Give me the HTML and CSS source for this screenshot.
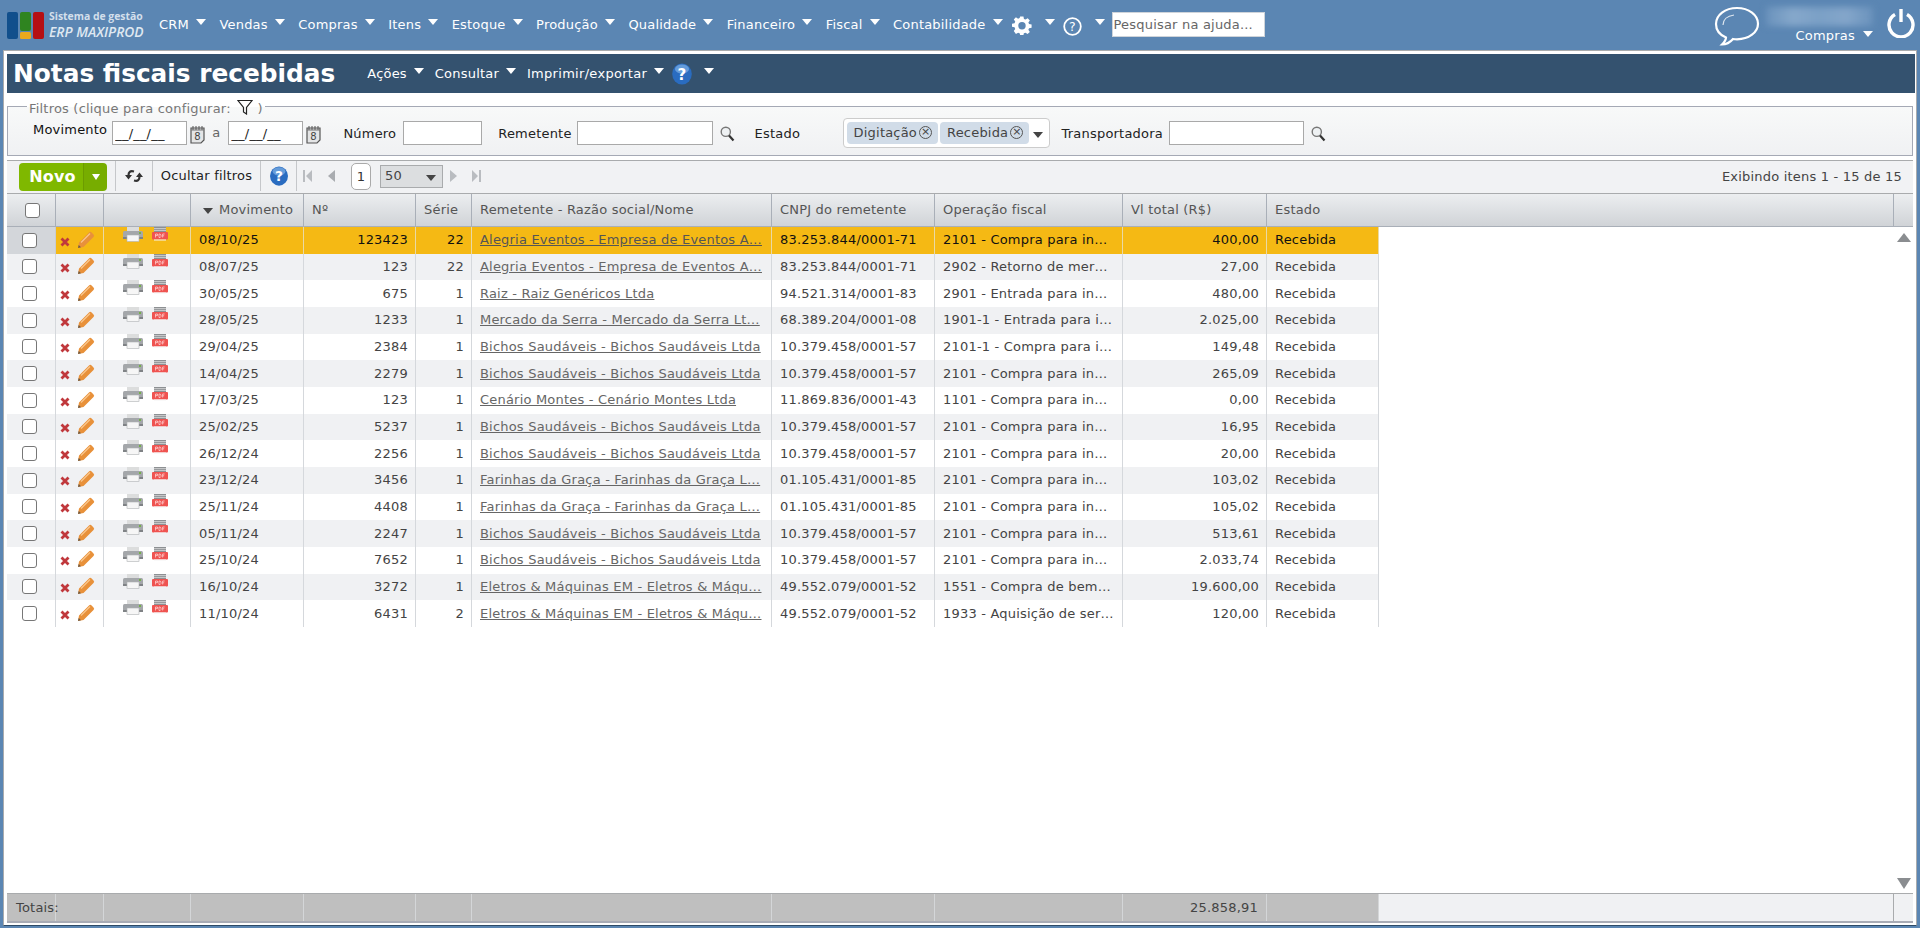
FILE: index.html
```html
<!DOCTYPE html>
<html lang="pt-BR">
<head>
<meta charset="utf-8">
<title>Notas fiscais recebidas</title>
<link rel="stylesheet" href="styles.css">
</head>
<body>
<svg class="defs" width="0" height="0" aria-hidden="true">
  <defs>
    <symbol id="i-x" viewBox="0 0 10 10"><path d="M1.5 1.5 8.5 8.5M8.5 1.5 1.5 8.5" stroke="#c0383c" stroke-width="2.8" fill="none"/></symbol>
    <symbol id="i-pencil" viewBox="0 0 18 18"><path d="M1 17 2 11.500 12 1.500a1.800 1.800 0 0 1 2.600 0l1.900 1.900a1.800 1.800 0 0 1 0 2.600L6.500 16Z" fill="#e8913a"/><path d="M4 11.500 13 2.500" stroke="#f9c78c" stroke-width="1.200"/><path d="M1 17 1.700 14 4 16.300Z" fill="#6b5a45"/></symbol>
    <symbol id="i-printer" viewBox="0 0 20 15"><rect x="4" y="0" width="12" height="5" fill="#dcdddd"/><rect x="0" y="4" width="20" height="7" rx="1.500" fill="#a4a7aa"/><rect x="0" y="10" width="20" height="2" fill="#7f8285"/><rect x="4" y="8" width="12" height="6.500" fill="#f6f6f6" stroke="#b0b2b4" stroke-width=".6"/><rect x="16" y="5" width="2" height="2" fill="#74b04a"/></symbol>
    <symbol id="i-pdf" viewBox="0 0 16 14"><rect x="2" y="0" width="12" height="5" fill="#8d9093"/><path d="M2 1.600h12M2 3.400h12" stroke="#e6e6e6" stroke-width=".7"/><rect x="0" y="5" width="16" height="7.500" rx="1" fill="#ef5350"/><rect x="2" y="12.500" width="12" height="1" fill="#f4f4f4"/><path d="M3.500 7v3.500M3.500 7h2v1.600h-2M7 7v3.500h1.200l.8-1V8l-.8-1H7M10.600 7v3.500M10.600 7h2M10.600 8.800h1.600" stroke="#ffdcdc" stroke-width=".7" fill="none"/></symbol>
    <symbol id="i-cal" viewBox="0 0 15 19"><path d="M1 3h13v12l-3 3H1Z" fill="#e4e5e6" stroke="#555" stroke-width="1.200"/><path d="M3 1v4M6 1v4M9 1v4M12 1v4" stroke="#555" stroke-width="1"/><path d="M1 5h13" stroke="#777"/><text x="7.500" y="15" font-size="10" text-anchor="middle" fill="#444" font-family="DejaVu Sans">8</text></symbol>
    <symbol id="i-search" viewBox="0 0 15 16"><circle cx="5.800" cy="5.800" r="4.600" fill="#eef1f3" stroke="#777" stroke-width="1.400"/><path d="M9 9.500 13.500 14.500" stroke="#333" stroke-width="2.200"/></symbol>
    <symbol id="i-help" viewBox="0 0 20 24"><ellipse cx="10" cy="12" rx="9.800" ry="10.500" fill="#2a6cc0"/><ellipse cx="10" cy="7" rx="7" ry="4.500" fill="#7fb0e6" opacity=".7"/><text x="10" y="17.500" font-size="15" font-weight="700" text-anchor="middle" fill="#fff" font-family="DejaVu Sans">?</text></symbol>
  </defs>
</svg>

<header class="topbar">
  <div class="logo">
    <svg class="logo-mark" width="38" height="28" viewBox="0 0 38 28">
      <rect x="0" y="0" width="11" height="27" rx="2" fill="#114f8c"/>
      <rect x="13" y="0" width="11" height="19" rx="2" fill="#2f8420"/>
      <rect x="13" y="20" width="11" height="7" rx="1.500" fill="#e9a91d"/>
      <rect x="26" y="0" width="11" height="27" rx="2" fill="#b50f14"/>
    </svg>
    <div class="logo-text">
      <span class="logo-a">Sistema de gestão</span>
      <span class="logo-b">ERP MAXIPROD</span>
    </div>
  </div>
  <nav class="mainnav">
    <span class="navitem">CRM<i class="caret"></i></span>
    <span class="navitem">Vendas<i class="caret"></i></span>
    <span class="navitem">Compras<i class="caret"></i></span>
    <span class="navitem">Itens<i class="caret"></i></span>
    <span class="navitem">Estoque<i class="caret"></i></span>
    <span class="navitem">Produção<i class="caret"></i></span>
    <span class="navitem">Qualidade<i class="caret"></i></span>
    <span class="navitem">Financeiro<i class="caret"></i></span>
    <span class="navitem">Fiscal<i class="caret"></i></span>
    <span class="navitem navitem-last">Contabilidade<i class="caret"></i></span>
    <span class="navicon navicon-gear">
      <svg width="20" height="20" viewBox="0 0 20 20"><path d="M8.300 1h3.400l.5 2.600 1.600.7 2.200-1.500 2.200 2.300-1.500 2.100.7 1.700 2.600.4v3.300l-2.600.5-.7 1.600 1.500 2.200-2.300 2.200-2.100-1.500-1.700.7-.4 1.600H8.300l-.5-1.600-1.600-.7-2.200 1.500L1.800 16l1.500-2.200-.7-1.600-2.600-.5V8.400l2.600-.5.7-1.600L1.800 4.100 4 1.900l2.200 1.500 1.600-.7Z" fill="#fff" transform="translate(0 -.6) scale(.98)"/><circle cx="10" cy="9.700" r="3.700" fill="#5b86b3"/></svg>
      <i class="caret"></i>
    </span>
    <span class="navicon navicon-help">
      <svg width="19" height="19" viewBox="0 0 19 19"><circle cx="9.500" cy="9.500" r="8.300" fill="none" stroke="#fff" stroke-width="1.800"/><text x="9.500" y="14" font-size="12.500" text-anchor="middle" fill="#fff" font-family="DejaVu Sans">?</text></svg>
      <i class="caret"></i>
    </span>
    <input class="helpsearch" type="text" placeholder="Pesquisar na ajuda...">
  </nav>
  <div class="userarea">
    <svg class="chat" width="46" height="40" viewBox="0 0 46 40"><path d="M23 2C11 2 2 9 2 18c0 6 4 11 10 13.500 0 2-1 4-4 7 4 0 8-2 11-5.500 1.400.2 2.700.3 4 .3 12 0 21-7 21-15.500S35 2 23 2Z" fill="none" stroke="#fff" stroke-width="2.200"/><path d="M9 19c0-5 4-9 11-10" fill="none" stroke="#fff" stroke-width="1.200" opacity=".8"/></svg>
    <div class="user">
      <div class="user-blur"></div>
      <div class="user-role">Compras<i class="caret"></i></div>
    </div>
    <svg class="power" width="28" height="30" viewBox="0 0 28 30"><path d="M8 6.500a12 12 0 1 0 12 0" fill="none" stroke="#fff" stroke-width="3.400"/><path d="M14 1v13" stroke="#fff" stroke-width="3.400"/></svg>
  </div>
</header>

<main class="panel">
  <section class="titlebar">
    <h1>Notas fiscais recebidas</h1>
    <span class="tmenu tmenu-a">Ações<i class="caret"></i></span>
    <span class="tmenu tmenu-a">Consultar<i class="caret"></i></span>
    <span class="tmenu tmenu-last">Imprimir/exportar<i class="caret"></i></span>
    <svg class="thelp" width="20" height="24"><use href="#i-help"/></svg>
    <i class="caret thelp-caret"></i>
  </section>

  <fieldset class="filters">
    <legend>Filtros (clique para configurar:
      <svg class="funnel" width="16" height="16" viewBox="0 0 16 16"><path d="M1 1.500h14L9.500 8.500V15l-3-2V8.500Z" fill="#fff" stroke="#222" stroke-width="1.200"/></svg>
    )</legend>
    <span class="flabel flabel-up">Movimento</span>
    <input class="date" type="text" value="__/__/__">
    <svg class="cal" width="15" height="19"><use href="#i-cal"/></svg>
    <span class="sep-a">a</span>
    <input class="date" type="text" value="__/__/__">
    <svg class="cal" width="15" height="19"><use href="#i-cal"/></svg>
    <span class="flabel f-num">Número</span>
    <input class="num" type="text">
    <span class="flabel f-rem">Remetente</span>
    <input class="rem" type="text">
    <svg class="search" width="15" height="16"><use href="#i-search"/></svg>
    <span class="flabel f-est">Estado</span>
    <div class="multi">
      <span class="chip">Digitação<i class="chipx">×</i></span>
      <span class="chip">Recebida<i class="chipx">×</i></span>
      <i class="caret caret-dark"></i>
    </div>
    <span class="flabel f-tra">Transportadora</span>
    <input class="tra" type="text">
    <svg class="search" width="15" height="16"><use href="#i-search"/></svg>
  </fieldset>

  <section class="grid">
    <div class="toolbar">
      <div class="novo"><span class="novo-main">Novo</span><span class="novo-drop"><i class="caret caret-small"></i></span></div>
      <div class="tool tool-refresh">
        <svg width="18" height="16" viewBox="0 0 18 16"><path d="M9 3.500C5 2.500 3.500 4 3.500 7.500M9 12.500C13 13.500 14.500 12 14.500 8.500" fill="none" stroke="#333" stroke-width="2.200"/><path d="M0 7h7l-3.500 4.500ZM11 9h7l-3.500-4.500Z" fill="#333"/></svg>
      </div>
      <div class="tool tool-text">Ocultar filtros</div>
      <div class="tool tool-help"><svg width="20" height="22"><use href="#i-help"/></svg></div>
      <div class="pager">
        <svg width="10" height="12" viewBox="0 0 10 12"><path d="M0 0h2v12H0ZM9 0v12L3 6Z" fill="#b9bcc0"/></svg>
        <svg class="pg-prev" width="7" height="12" viewBox="0 0 7 12"><path d="M7 0v12L0 6Z" fill="#a9acb0"/></svg>
        <span class="pg-num">1</span>
        <span class="pg-size">50<i class="caret caret-dark caret-wide"></i></span>
        <svg class="pg-next" width="7" height="12" viewBox="0 0 7 12"><path d="M0 0v12L7 6Z" fill="#b9bcc0"/></svg>
        <svg class="pg-last" width="10" height="12" viewBox="0 0 10 12"><path d="M0 0v12L6 6ZM7 0h2v12H7Z" fill="#b9bcc0"/></svg>
      </div>
      <div class="showing">Exibindo itens 1 - 15 de 15</div>
    </div>

    <table class="thead">
      <colgroup><col class="c1"><col class="c2"><col class="c3"><col class="c4"><col class="c5"><col class="c6"><col class="c7"><col class="c8"><col class="c9"><col class="c10"><col class="c11"><col class="c12"><col class="c13"></colgroup>
      <tr>
        <th class="hcheck"><input class="check" type="checkbox"></th><th></th><th></th>
        <th class="hsort"><i class="caret caret-dark"></i>Movimento</th><th>Nº</th><th>Série</th>
        <th>Remetente - Razão social/Nome</th><th>CNPJ do remetente</th><th>Operação fiscal</th><th>Vl total (R$)</th>
        <th colspan="2">Estado</th><th></th>
      </tr>
    </table>

    <div class="gridbody">
      <table class="tbody">
        <colgroup><col class="c1"><col class="c2"><col class="c3"><col class="c4"><col class="c5"><col class="c6"><col class="c7"><col class="c8"><col class="c9"><col class="c10"><col class="c11"></colgroup>
        <tr class="sel"><td class="tdc"><input class="check" type="checkbox"></td><td class="acts"><svg class="ix" width="10" height="10"><use href="#i-x"/></svg><svg class="ip" width="18" height="18"><use href="#i-pencil"/></svg></td><td class="prints"><svg width="20" height="15"><use href="#i-printer"/></svg><svg class="ipdf" width="16" height="14"><use href="#i-pdf"/></svg></td><td>08/10/25</td><td class="r">123423</td><td class="r">22</td><td><a>Alegria Eventos - Empresa de Eventos A…</a></td><td>83.253.844/0001-71</td><td>2101 - Compra para in…</td><td class="r">400,00</td><td>Recebida</td></tr>
        <tr><td class="tdc"><input class="check" type="checkbox"></td><td class="acts"><svg class="ix" width="10" height="10"><use href="#i-x"/></svg><svg class="ip" width="18" height="18"><use href="#i-pencil"/></svg></td><td class="prints"><svg width="20" height="15"><use href="#i-printer"/></svg><svg class="ipdf" width="16" height="14"><use href="#i-pdf"/></svg></td><td>08/07/25</td><td class="r">123</td><td class="r">22</td><td><a>Alegria Eventos - Empresa de Eventos A…</a></td><td>83.253.844/0001-71</td><td>2902 - Retorno de mer…</td><td class="r">27,00</td><td>Recebida</td></tr>
        <tr><td class="tdc"><input class="check" type="checkbox"></td><td class="acts"><svg class="ix" width="10" height="10"><use href="#i-x"/></svg><svg class="ip" width="18" height="18"><use href="#i-pencil"/></svg></td><td class="prints"><svg width="20" height="15"><use href="#i-printer"/></svg><svg class="ipdf" width="16" height="14"><use href="#i-pdf"/></svg></td><td>30/05/25</td><td class="r">675</td><td class="r">1</td><td><a>Raiz - Raiz Genéricos Ltda</a></td><td>94.521.314/0001-83</td><td>2901 - Entrada para in…</td><td class="r">480,00</td><td>Recebida</td></tr>
        <tr><td class="tdc"><input class="check" type="checkbox"></td><td class="acts"><svg class="ix" width="10" height="10"><use href="#i-x"/></svg><svg class="ip" width="18" height="18"><use href="#i-pencil"/></svg></td><td class="prints"><svg width="20" height="15"><use href="#i-printer"/></svg><svg class="ipdf" width="16" height="14"><use href="#i-pdf"/></svg></td><td>28/05/25</td><td class="r">1233</td><td class="r">1</td><td><a>Mercado da Serra - Mercado da Serra Lt…</a></td><td>68.389.204/0001-08</td><td>1901-1 - Entrada para i…</td><td class="r">2.025,00</td><td>Recebida</td></tr>
        <tr><td class="tdc"><input class="check" type="checkbox"></td><td class="acts"><svg class="ix" width="10" height="10"><use href="#i-x"/></svg><svg class="ip" width="18" height="18"><use href="#i-pencil"/></svg></td><td class="prints"><svg width="20" height="15"><use href="#i-printer"/></svg><svg class="ipdf" width="16" height="14"><use href="#i-pdf"/></svg></td><td>29/04/25</td><td class="r">2384</td><td class="r">1</td><td><a>Bichos Saudáveis - Bichos Saudáveis Ltda</a></td><td>10.379.458/0001-57</td><td>2101-1 - Compra para i…</td><td class="r">149,48</td><td>Recebida</td></tr>
        <tr><td class="tdc"><input class="check" type="checkbox"></td><td class="acts"><svg class="ix" width="10" height="10"><use href="#i-x"/></svg><svg class="ip" width="18" height="18"><use href="#i-pencil"/></svg></td><td class="prints"><svg width="20" height="15"><use href="#i-printer"/></svg><svg class="ipdf" width="16" height="14"><use href="#i-pdf"/></svg></td><td>14/04/25</td><td class="r">2279</td><td class="r">1</td><td><a>Bichos Saudáveis - Bichos Saudáveis Ltda</a></td><td>10.379.458/0001-57</td><td>2101 - Compra para in…</td><td class="r">265,09</td><td>Recebida</td></tr>
        <tr><td class="tdc"><input class="check" type="checkbox"></td><td class="acts"><svg class="ix" width="10" height="10"><use href="#i-x"/></svg><svg class="ip" width="18" height="18"><use href="#i-pencil"/></svg></td><td class="prints"><svg width="20" height="15"><use href="#i-printer"/></svg><svg class="ipdf" width="16" height="14"><use href="#i-pdf"/></svg></td><td>17/03/25</td><td class="r">123</td><td class="r">1</td><td><a>Cenário Montes - Cenário Montes Ltda</a></td><td>11.869.836/0001-43</td><td>1101 - Compra para in…</td><td class="r">0,00</td><td>Recebida</td></tr>
        <tr><td class="tdc"><input class="check" type="checkbox"></td><td class="acts"><svg class="ix" width="10" height="10"><use href="#i-x"/></svg><svg class="ip" width="18" height="18"><use href="#i-pencil"/></svg></td><td class="prints"><svg width="20" height="15"><use href="#i-printer"/></svg><svg class="ipdf" width="16" height="14"><use href="#i-pdf"/></svg></td><td>25/02/25</td><td class="r">5237</td><td class="r">1</td><td><a>Bichos Saudáveis - Bichos Saudáveis Ltda</a></td><td>10.379.458/0001-57</td><td>2101 - Compra para in…</td><td class="r">16,95</td><td>Recebida</td></tr>
        <tr><td class="tdc"><input class="check" type="checkbox"></td><td class="acts"><svg class="ix" width="10" height="10"><use href="#i-x"/></svg><svg class="ip" width="18" height="18"><use href="#i-pencil"/></svg></td><td class="prints"><svg width="20" height="15"><use href="#i-printer"/></svg><svg class="ipdf" width="16" height="14"><use href="#i-pdf"/></svg></td><td>26/12/24</td><td class="r">2256</td><td class="r">1</td><td><a>Bichos Saudáveis - Bichos Saudáveis Ltda</a></td><td>10.379.458/0001-57</td><td>2101 - Compra para in…</td><td class="r">20,00</td><td>Recebida</td></tr>
        <tr><td class="tdc"><input class="check" type="checkbox"></td><td class="acts"><svg class="ix" width="10" height="10"><use href="#i-x"/></svg><svg class="ip" width="18" height="18"><use href="#i-pencil"/></svg></td><td class="prints"><svg width="20" height="15"><use href="#i-printer"/></svg><svg class="ipdf" width="16" height="14"><use href="#i-pdf"/></svg></td><td>23/12/24</td><td class="r">3456</td><td class="r">1</td><td><a>Farinhas da Graça - Farinhas da Graça L…</a></td><td>01.105.431/0001-85</td><td>2101 - Compra para in…</td><td class="r">103,02</td><td>Recebida</td></tr>
        <tr><td class="tdc"><input class="check" type="checkbox"></td><td class="acts"><svg class="ix" width="10" height="10"><use href="#i-x"/></svg><svg class="ip" width="18" height="18"><use href="#i-pencil"/></svg></td><td class="prints"><svg width="20" height="15"><use href="#i-printer"/></svg><svg class="ipdf" width="16" height="14"><use href="#i-pdf"/></svg></td><td>25/11/24</td><td class="r">4408</td><td class="r">1</td><td><a>Farinhas da Graça - Farinhas da Graça L…</a></td><td>01.105.431/0001-85</td><td>2101 - Compra para in…</td><td class="r">105,02</td><td>Recebida</td></tr>
        <tr><td class="tdc"><input class="check" type="checkbox"></td><td class="acts"><svg class="ix" width="10" height="10"><use href="#i-x"/></svg><svg class="ip" width="18" height="18"><use href="#i-pencil"/></svg></td><td class="prints"><svg width="20" height="15"><use href="#i-printer"/></svg><svg class="ipdf" width="16" height="14"><use href="#i-pdf"/></svg></td><td>05/11/24</td><td class="r">2247</td><td class="r">1</td><td><a>Bichos Saudáveis - Bichos Saudáveis Ltda</a></td><td>10.379.458/0001-57</td><td>2101 - Compra para in…</td><td class="r">513,61</td><td>Recebida</td></tr>
        <tr><td class="tdc"><input class="check" type="checkbox"></td><td class="acts"><svg class="ix" width="10" height="10"><use href="#i-x"/></svg><svg class="ip" width="18" height="18"><use href="#i-pencil"/></svg></td><td class="prints"><svg width="20" height="15"><use href="#i-printer"/></svg><svg class="ipdf" width="16" height="14"><use href="#i-pdf"/></svg></td><td>25/10/24</td><td class="r">7652</td><td class="r">1</td><td><a>Bichos Saudáveis - Bichos Saudáveis Ltda</a></td><td>10.379.458/0001-57</td><td>2101 - Compra para in…</td><td class="r">2.033,74</td><td>Recebida</td></tr>
        <tr><td class="tdc"><input class="check" type="checkbox"></td><td class="acts"><svg class="ix" width="10" height="10"><use href="#i-x"/></svg><svg class="ip" width="18" height="18"><use href="#i-pencil"/></svg></td><td class="prints"><svg width="20" height="15"><use href="#i-printer"/></svg><svg class="ipdf" width="16" height="14"><use href="#i-pdf"/></svg></td><td>16/10/24</td><td class="r">3272</td><td class="r">1</td><td><a>Eletros &amp; Máquinas EM - Eletros &amp; Máqu…</a></td><td>49.552.079/0001-52</td><td>1551 - Compra de bem…</td><td class="r">19.600,00</td><td>Recebida</td></tr>
        <tr><td class="tdc"><input class="check" type="checkbox"></td><td class="acts"><svg class="ix" width="10" height="10"><use href="#i-x"/></svg><svg class="ip" width="18" height="18"><use href="#i-pencil"/></svg></td><td class="prints"><svg width="20" height="15"><use href="#i-printer"/></svg><svg class="ipdf" width="16" height="14"><use href="#i-pdf"/></svg></td><td>11/10/24</td><td class="r">6431</td><td class="r">2</td><td><a>Eletros &amp; Máquinas EM - Eletros &amp; Máqu…</a></td><td>49.552.079/0001-52</td><td>1933 - Aquisição de ser…</td><td class="r">120,00</td><td>Recebida</td></tr>
      </table>
      <div class="vscroll"><i class="arrow-up"></i><i class="arrow-down"></i></div>
    </div>

    <table class="tfoot">
      <colgroup><col class="c1"><col class="c2"><col class="c3"><col class="c4"><col class="c5"><col class="c6"><col class="c7"><col class="c8"><col class="c9"><col class="c10"><col class="c11"><col class="c12"><col class="c13"></colgroup>
      <tr><td class="tot-label">Totais:</td><td></td><td></td><td></td><td></td><td></td><td></td><td></td><td></td><td class="r">25.858,91</td><td></td><td class="tf-fill"></td><td class="tf-end"></td></tr>
    </table>
  </section>
</main>
</body>
</html>
```

FILE: styles.css
```css
* { box-sizing: border-box; }
html, body { height: 100%; margin: 0; overflow: hidden; }
body {
  background: #5b86b3;
  font: 13px/16px "DejaVu Sans", Verdana, sans-serif;
  letter-spacing: .2px;
  color: #333;
  display: flex;
  flex-direction: column;
}
.defs { position: absolute; }
i { font-style: normal; }

.caret {
  display: inline-block;
  width: 0; height: 0;
  border-left: 5px solid transparent;
  border-right: 5px solid transparent;
  border-top: 6px solid #fff;
}
.caret-dark { border-top-color: #444; }

/* top bar */
.topbar { height: 50px; flex: none; display: flex; align-items: center; color: #fff; background: #5b86b3; }
.logo { width: 159px; padding-left: 7px; display: flex; align-items: center; flex: none; }
.logo-mark { flex: none; margin-top: 1px; }
.logo-text { margin-left: 4px; display: flex; flex-direction: column; font-family: "Open Sans", sans-serif; letter-spacing: 0; }
.logo-a { font-size: 10.4px; line-height: 14px; font-weight: 700; color: #d3dfeb; white-space: nowrap; }
.logo-b { font-size: 13.8px; line-height: 18px; font-weight: 600; font-style: italic; color: #dfe8f1; white-space: nowrap; }
.mainnav { display: flex; align-items: center; }
.navitem { display: flex; align-items: center; white-space: nowrap; margin-right: 13.5px; margin-top: -1px; color: #fff; }
.navitem .caret { margin-left: 7px; margin-top: -6px; }
.navitem-last { margin-right: 9px; }
.navicon { display: flex; align-items: center; }
.navicon svg { display: block; margin-top: 2px; }
.navicon .caret { margin-top: -6px; }
.navicon-gear { margin-right: 8px; }
.navicon-gear .caret { margin-left: 13px; }
.navicon-help .caret { margin-left: 13px; }
.helpsearch { width: 153px; height: 25px; margin: -1px 0 0 7px; border: 1px solid #cfd4da; padding: 0 1px; background: #fff; font: 13px "DejaVu Sans", sans-serif; letter-spacing: .2px; }
.helpsearch::placeholder { color: #666; opacity: 1; }
.userarea { margin-left: auto; display: flex; align-items: flex-start; height: 50px; }
.chat { margin-top: 6px; flex: none; }
.user { width: 107px; margin-left: 6px; flex: none; }
.user-blur { height: 19px; margin-top: 7px; background: linear-gradient(90deg, #6a92bc, #86a8cb 25%, #7ba0c6 50%, #84a6ca 75%, #6a92bc); filter: blur(3px); }
.user-role { display: flex; align-items: center; justify-content: flex-end; margin-top: 2px; }
.user-role .caret { margin-left: 8px; margin-top: -5px; }
.power { margin: 8px 5px 0 14px; flex: none; }

/* panel */
.panel {
  flex: 1;
  min-height: 0;
  margin: 0 3px 2px;
  background: #fff;
  border: 1px solid #a9abad;
  border-bottom-color: #2d4a66;
  padding: 3px 3px 2px 3px;
  display: flex;
  flex-direction: column;
}
.titlebar { height: 39px; flex: none; background: #34526f; color: #fff; display: flex; align-items: center; padding-left: 6px; margin-right: -2px; }
.titlebar h1 { margin: 0 32px 0 0; font-size: 24.8px; line-height: 39px; font-weight: 700; white-space: nowrap; letter-spacing: 0; }
.tmenu { display: flex; align-items: center; white-space: nowrap; margin-right: 12px; margin-top: 1px; }
.tmenu .caret { margin-left: 7px; margin-top: -6px; }
.tmenu-a { margin-right: 11px; }
.tmenu-last { letter-spacing: .3px; }
.thelp { margin-left: -4px; margin-top: 1px; flex: none; }
.thelp-caret { margin-left: 12px; margin-top: -6px; }

/* filters */
.filters {
  flex: none;
  height: 60px;
  margin: 3px 0 0;
  padding: 2px 0 0 25px;
  border: 1px solid #a5a9b5;
  background: linear-gradient(#f8f9f9, #f0f1f3);
  display: flex;
  align-items: center;
  min-width: 0;
}
.filters legend { height: 20px; margin-left: -6px; padding: 3px 2px 0; color: #777; white-space: nowrap; font-size: 13px; line-height: 16px; }
.funnel { vertical-align: -2px; margin: 0 0 0 2px; }
.filters input { height: 24px; border: 1px solid #a9a9a9; background: #fff; padding: 0 2px; font: 13px "DejaVu Sans", sans-serif; letter-spacing: .2px; color: #222; }
.flabel { color: #222; white-space: nowrap; margin-top: 1px; }
.flabel-up { margin-top: 0; margin-bottom: 7px; margin-right: 5px; color: #111; }
.date { width: 75px; }
.cal { margin-left: 3px; margin-top: 2px; flex: none; }
.sep-a { margin: 0 8px 0 7px; color: #666; }
.f-num { margin-left: 22px; margin-right: 7px; }
.num { width: 79px; }
.f-rem { margin-left: 16px; margin-right: 5px; }
.rem { width: 136px; }
.search { margin-left: 7px; flex: none; margin-top: 2px; }
.f-est { margin-left: 20px; width: 88px; }
.multi { width: 207px; height: 30px; background: #fff; border: 1px solid #ccc; border-radius: 4px; display: flex; align-items: center; padding: 0 3px; }
.chip { height: 22px; background: #d1dce8; border-radius: 4px; display: flex; align-items: center; padding: 0 6px 0 7px; margin-right: 2px; color: #444; white-space: nowrap; margin-top: -1px; }
.chipx { display: inline-block; width: 13px; height: 13px; border: 1px solid #555; border-radius: 50%; margin-left: 2px; font-size: 11px; line-height: 10px; text-align: center; color: #444; letter-spacing: 0; }
.multi .caret { margin-left: 2px; margin-top: 3px; }
.f-tra { margin-left: 12px; margin-right: 6px; }
.tra { width: 135px; }

/* grid */
.grid { flex: 1; min-height: 0; margin-top: 4px; display: flex; flex-direction: column; border-bottom: 2px solid #a8abb5; }
.toolbar { height: 34px; flex: none; background: #f1f2f4; border-top: 1px solid #a9abad; border-bottom: 1px solid #a9abad; display: flex; align-items: center; }
.novo { margin-left: 12px; display: flex; height: 28px; width: 88px; border-radius: 4px; overflow: hidden; flex: none; }
.novo-main { width: 64px; background: #7fb800; color: #fff; font-size: 16px; font-weight: 700; line-height: 28px; text-align: center; padding-left: 3px; }
.novo-drop { width: 24px; background: #77ad00; border-left: 1px solid #6c9c00; display: flex; align-items: center; justify-content: center; }
.caret-small { border-left-width: 4px; border-right-width: 4px; border-top-width: 6px; }
.tool { height: 30px; border-left: 1px solid #c5c7ca; display: flex; align-items: center; justify-content: center; flex: none; margin-top: -2px; }
.tool-refresh { margin-left: 8px; width: 37px; }
.tool-text { width: 108px; color: #222; white-space: nowrap; }
.tool-help { width: 36px; }
.pager { height: 30px; margin-top: -2px; border-left: 1px solid #c5c7ca; display: flex; align-items: center; padding-left: 6px; flex: none; }
.pg-prev { margin-left: 15px; }
.pg-num { width: 20px; height: 27px; margin-left: 16px; border: 1px solid #aaa; border-radius: 5px; background: #fff; text-align: center; line-height: 26px; color: #333; margin-top: 1px; }
.pg-size { width: 63px; height: 23px; margin-left: 9px; background: #dcdee0; border: 1px solid #a9abad; display: flex; align-items: center; justify-content: space-between; padding: 0 6px 0 4px; color: #444; }
.caret-wide { margin-top: 3px; }
.pg-next { margin-left: 7px; }
.pg-last { margin-left: 15px; }
.showing { margin-left: auto; margin-right: 11px; color: #444; white-space: nowrap; }

.c1 { width: 49px; } .c2 { width: 48px; } .c3 { width: 87px; } .c4 { width: 113px; } .c5 { width: 112px; }
.c6 { width: 56px; } .c7 { width: 300px; } .c8 { width: 163px; } .c9 { width: 188px; } .c10 { width: 144px; }
.c11 { width: 112px; } .c12 { width: 515px; } .c13 { width: 19px; }

table { border-collapse: separate; border-spacing: 0; table-layout: fixed; }
.thead, .tfoot { width: 1906px; flex: none; }
.thead th {
  height: 33px;
  padding: 0 8px;
  text-align: left;
  font-weight: 400;
  color: #555;
  white-space: nowrap;
  background: linear-gradient(#eceef0, #d0d3d7);
  border-right: 1px solid #a9afb8;
  border-bottom: 1px solid #a9afb8;
}
.thead th:last-child { border-right: 0; }
.thead .hcheck { text-align: center; padding: 0 0 0 18px; }
.thead .hsort { padding-left: 12px; }
.hsort .caret { margin-right: 6px; vertical-align: 0; }
.check { appearance: none; -webkit-appearance: none; display: block; width: 15px; height: 15px; margin: 0; border: 1px solid #777; border-radius: 3px; background: #fff; }

.gridbody { flex: 1; min-height: 0; display: flex; justify-content: space-between; background: #fff; }
.tbody { width: 1372px; flex: none; align-self: flex-start; }
.tbody td {
  height: 26.67px;
  padding: 0 7px 0 8px;
  white-space: nowrap;
  overflow: hidden;
  color: #444;
  border-right: 1px solid #d5d8dc;
}
.tbody tr:nth-child(even) td { background: #f0f1f3; }
.tbody td a { color: #666; text-decoration: underline; }
.tbody .tdc { padding: 0 0 0 15px; background: #fff; }
.tbody .r { text-align: right; }
.tbody .sel td { background: #f5b914; color: #111; border-right-color: #e9d9a5; }
.tbody .sel td a { color: #555; }
.tbody .sel .tdc { background: #d3d6da; border-right-color: #c9ccd0; }
.tbody .acts { padding: 0 0 0 4px; }
.ix { vertical-align: middle; margin-right: 7px; margin-top: 2px; }
.ip { vertical-align: middle; margin-top: -2px; }
.tbody .prints { vertical-align: top; padding: 0 0 0 19px; }
.prints svg { display: inline-block; vertical-align: top; }
.ipdf { margin-left: 9px; }

.vscroll { width: 19px; flex: none; display: flex; flex-direction: column; justify-content: space-between; align-items: center; padding: 6px 0 4px; }
.arrow-up { width: 0; height: 0; border-left: 7px solid transparent; border-right: 7px solid transparent; border-bottom: 9px solid #8a8d90; }
.arrow-down { width: 0; height: 0; border-left: 7px solid transparent; border-right: 7px solid transparent; border-top: 11px solid #8a8d90; }

.tfoot { border-top: 1px solid #a9abad; }
.tfoot td { height: 27px; padding: 0 8px; background: #bfbfbf; border-right: 1px solid #d4d6d8; color: #444; white-space: nowrap; }
.tfoot .tot-label { padding-left: 9px; overflow: visible; }
.tfoot .r { text-align: right; }
.tfoot .tf-fill { background: #f0f1f3; border-right-color: #a9abad; }
.tfoot .tf-end { background: #f0f1f3; border-right: 0; }
```
